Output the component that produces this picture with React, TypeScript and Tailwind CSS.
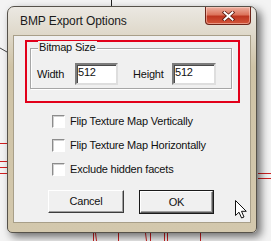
import React from "react";

function BackdropLines() {
  return (
    <svg className="absolute inset-0" width="271" height="241" viewBox="0 0 271 241" fill="none">
      <line x1="111.5" y1="0" x2="111.5" y2="7" stroke="#222" />
      <line x1="0" y1="48" x2="7" y2="52" stroke="#444" />
      <line x1="0" y1="143.5" x2="7" y2="143.5" stroke="#d02020" />
      <line x1="0" y1="161.5" x2="7" y2="161.5" stroke="#d02020" />
      <line x1="0" y1="167.5" x2="7" y2="167.5" stroke="#d02020" />
      <line x1="0" y1="173.5" x2="7" y2="173.5" stroke="#d02020" />
      <line x1="258" y1="173.5" x2="271" y2="173.5" stroke="#d02020" />
      <line x1="258" y1="178.5" x2="271" y2="178.5" stroke="#d02020" />
      <line x1="93.5" y1="233" x2="93.5" y2="241" stroke="#d02020" />
      <line x1="95.5" y1="233" x2="96.5" y2="241" stroke="#d02020" />
      <line x1="118.5" y1="233" x2="118.5" y2="241" stroke="#d02020" />
      <line x1="145.5" y1="233" x2="146.5" y2="241" stroke="#d02020" />
      <line x1="150.5" y1="233" x2="150.5" y2="241" stroke="#d02020" />
      <line x1="164.5" y1="233" x2="164.5" y2="241" stroke="#d02020" />
      <line x1="167.5" y1="233" x2="167.5" y2="241" stroke="#d02020" />
      <line x1="200.5" y1="233" x2="200.5" y2="241" stroke="#d02020" />
    </svg>
  );
}

function Checkbox({ label }: { label: string }) {
  return (
    <div className="flex h-[13px] items-center gap-[5px]">
      <span className="box-border h-[13px] w-[13px] border border-t-[#8c8c8c] border-l-[#8c8c8c] border-r-white border-b-white bg-white shadow-[inset_1px_1px_0_#d0d0d0]" />
      <span className="leading-[13px]">{label}</span>
    </div>
  );
}

function SizeField({ value, width }: { value: string; width: string }) {
  return (
    <div
      className={`box-border h-[22px] ${width} border-2 border-t-[#7c7c7c] border-l-[#7c7c7c] border-r-[#dedede] border-b-[#dedede] bg-white pl-[1px] leading-[14px] shadow-[inset_1px_1px_0_#4a4a4a]`}
    >
      {value}
    </div>
  );
}

export default function App() {
  return (
    <div className="relative h-[241px] w-[271px] overflow-hidden bg-[#f3f3f3] pl-[7px] pt-[6px] font-['Liberation_Sans',Arial,sans-serif] text-[11px] tracking-[-0.2px] text-[#111]">
      <BackdropLines />

      <div className="relative box-border flex h-[227px] w-[250px] flex-col rounded-t-[7px] rounded-b-[5px] border border-[#56524a] bg-[linear-gradient(180deg,#ebe8e2_0px,#dfd9cb_26px,#cfc3a6_60px,#d3c8ad_100%)] px-[5px] pb-[9px] shadow-[4px_4px_9px_rgba(0,0,0,0.55)]">
        {/* title bar */}
        <div className="flex h-[28px] items-start justify-between">
          <span className="pl-[7px] pt-[7px] text-[12px] leading-[15px] tracking-[-0.1px] text-[#1a1a1a]">BMP Export Options</span>
          <div className="box-border flex h-[18px] w-[46px] items-center justify-center rounded-b-[4px] border border-t-0 border-[#6e2418] bg-[linear-gradient(180deg,#eeb0a0_0%,#dc745c_45%,#be3620_55%,#d4563a_100%)] shadow-[inset_0_0_0_1px_rgba(255,220,210,0.5)]">
            <svg width="13" height="10" viewBox="0 0 13 10">
              <path d="M2.5 1.5 L10.5 8.5 M10.5 1.5 L2.5 8.5" stroke="#5a1a10" strokeWidth="3.6" strokeLinecap="square" />
              <path d="M2.5 1.5 L10.5 8.5 M10.5 1.5 L2.5 8.5" stroke="#ffffff" strokeWidth="2" strokeLinecap="square" />
            </svg>
          </div>
        </div>

        {/* client area */}
        <div className="flex flex-1 flex-col border border-[#a89f89] bg-[#f0f0f0]">
          <div className="ml-[11px] mt-[4px] box-border h-[63px] w-[215px] border-2 border-[#e2001a]">
            <div className="relative ml-[3px] mt-[6px] box-border h-[41px] w-[202px] border border-[#a6a6a6] shadow-[inset_1px_1px_0_#ffffff,1px_1px_0_#ffffff]">
              <span className="absolute -top-[8px] left-[7px] bg-[#f0f0f0] px-[1px] leading-[13px]">Bitmap Size</span>
              <div className="flex items-center pl-[6px] pt-[14px]">
                <span className="w-[38px] leading-[13px]">Width</span>
                <SizeField value="512" width="w-[43px]" />
                <span className="ml-[15px] w-[39px] leading-[13px]">Height</span>
                <SizeField value="512" width="w-[44px]" />
              </div>
            </div>
          </div>

          <div className="ml-[38px] mt-[12px] flex flex-col gap-[11px]">
            <Checkbox label="Flip Texture Map Vertically" />
            <Checkbox label="Flip Texture Map Horizontally" />
            <Checkbox label="Exclude hidden facets" />
          </div>

          <div className="ml-[34px] mt-[14px] flex gap-[15px]">
            <div className="box-border flex h-[23px] w-[76px] items-center justify-center border border-t-white border-l-white border-r-[#3c3c3c] border-b-[#3c3c3c] bg-[#f0f0f0] shadow-[inset_-1px_-1px_0_#a0a0a0]">
              Cancel
            </div>
            <div className="box-border h-[24px] w-[75px] border border-[#1a1a1a]">
              <div className="flex h-full w-full items-center justify-center border border-t-white border-l-white border-r-[#5a5a5a] border-b-[#5a5a5a] bg-[#f0f0f0] shadow-[inset_-1px_-1px_0_#a0a0a0]">
                OK
              </div>
            </div>
          </div>
        </div>
      </div>

      {/* mouse pointer */}
      <svg className="absolute left-[235px] top-[200px]" width="13" height="19" viewBox="0 0 13 19">
        <path
          d="M0.5 0.5 L0.5 15.5 L4 12.2 L6.6 18 L9 17 L6.5 11.3 L11.3 11.3 Z"
          fill="#ffffff"
          stroke="#111111"
          strokeWidth="1"
          strokeLinejoin="miter"
        />
      </svg>
    </div>
  );
}
